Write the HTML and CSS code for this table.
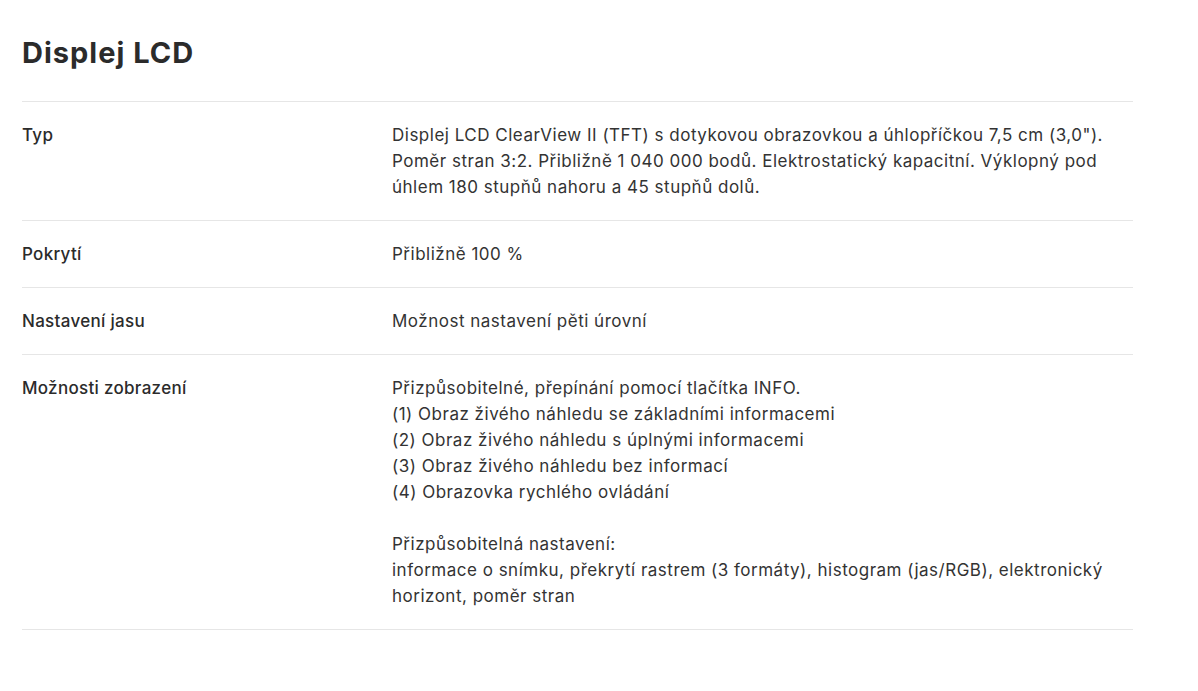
FILE: index.html
```html
<!DOCTYPE html>
<html lang="cs">
<head>
<meta charset="utf-8">
<title>Displej LCD</title>
<link rel="stylesheet" href="styles.css">
</head>
<body>
<section class="specs">
  <h2 class="specs-title">Displej LCD</h2>
  <div class="spec-row">
    <div class="spec-label">Typ</div>
    <div class="spec-value">Displej LCD ClearView II (TFT) s dotykovou obrazovkou a úhlopříčkou 7,5 cm (3,0"). Poměr stran 3:2. Přibližně 1 040 000 bodů. Elektrostatický kapacitní. Výklopný pod úhlem 180 stupňů nahoru a 45 stupňů dolů.</div>
  </div>
  <div class="spec-row">
    <div class="spec-label">Pokrytí</div>
    <div class="spec-value">Přibližně 100 %</div>
  </div>
  <div class="spec-row">
    <div class="spec-label">Nastavení jasu</div>
    <div class="spec-value">Možnost nastavení pěti úrovní</div>
  </div>
  <div class="spec-row">
    <div class="spec-label">Možnosti zobrazení</div>
    <div class="spec-value">Přizpůsobitelné, přepínání pomocí tlačítka INFO.<br>(1) Obraz živého náhledu se základními informacemi<br>(2) Obraz živého náhledu s úplnými informacemi<br>(3) Obraz živého náhledu bez informací<br>(4) Obrazovka rychlého ovládání<br><br>Přizpůsobitelná nastavení:<br>informace o snímku, překrytí rastrem (3 formáty), histogram (jas/RGB), elektronický horizont, poměr stran</div>
  </div>
</section>
</body>
</html>
```
FILE: styles.css
```css
html, body {
  margin: 0;
  padding: 0;
  background: #ffffff;
}
body {
  font-family: "Inter", "Open Sans", sans-serif;
  color: #333333;
}
.specs {
  width: 1111px;
  margin-left: 22px;
  padding-top: 34px;
}
.specs-title {
  margin: 0;
  font-size: 29px;
  line-height: 38px;
  font-weight: 700;
  letter-spacing: 1px;
  color: #2b2b2b;
  padding-bottom: 29px;
  border-bottom: 1px solid #e6e6e6;
}
.spec-row {
  display: grid;
  grid-template-columns: 370px 1fr;
  padding: 20px 0;
  border-bottom: 1px solid #e6e6e6;
  font-size: 17px;
  line-height: 26px;
}
.spec-label {
  font-weight: 500;
  letter-spacing: 0.3px;
  color: #2b2b2b;
}
.spec-value {
  font-weight: 400;
  letter-spacing: 0.5px;
  color: #333333;
  padding-right: 20px;
}
```
